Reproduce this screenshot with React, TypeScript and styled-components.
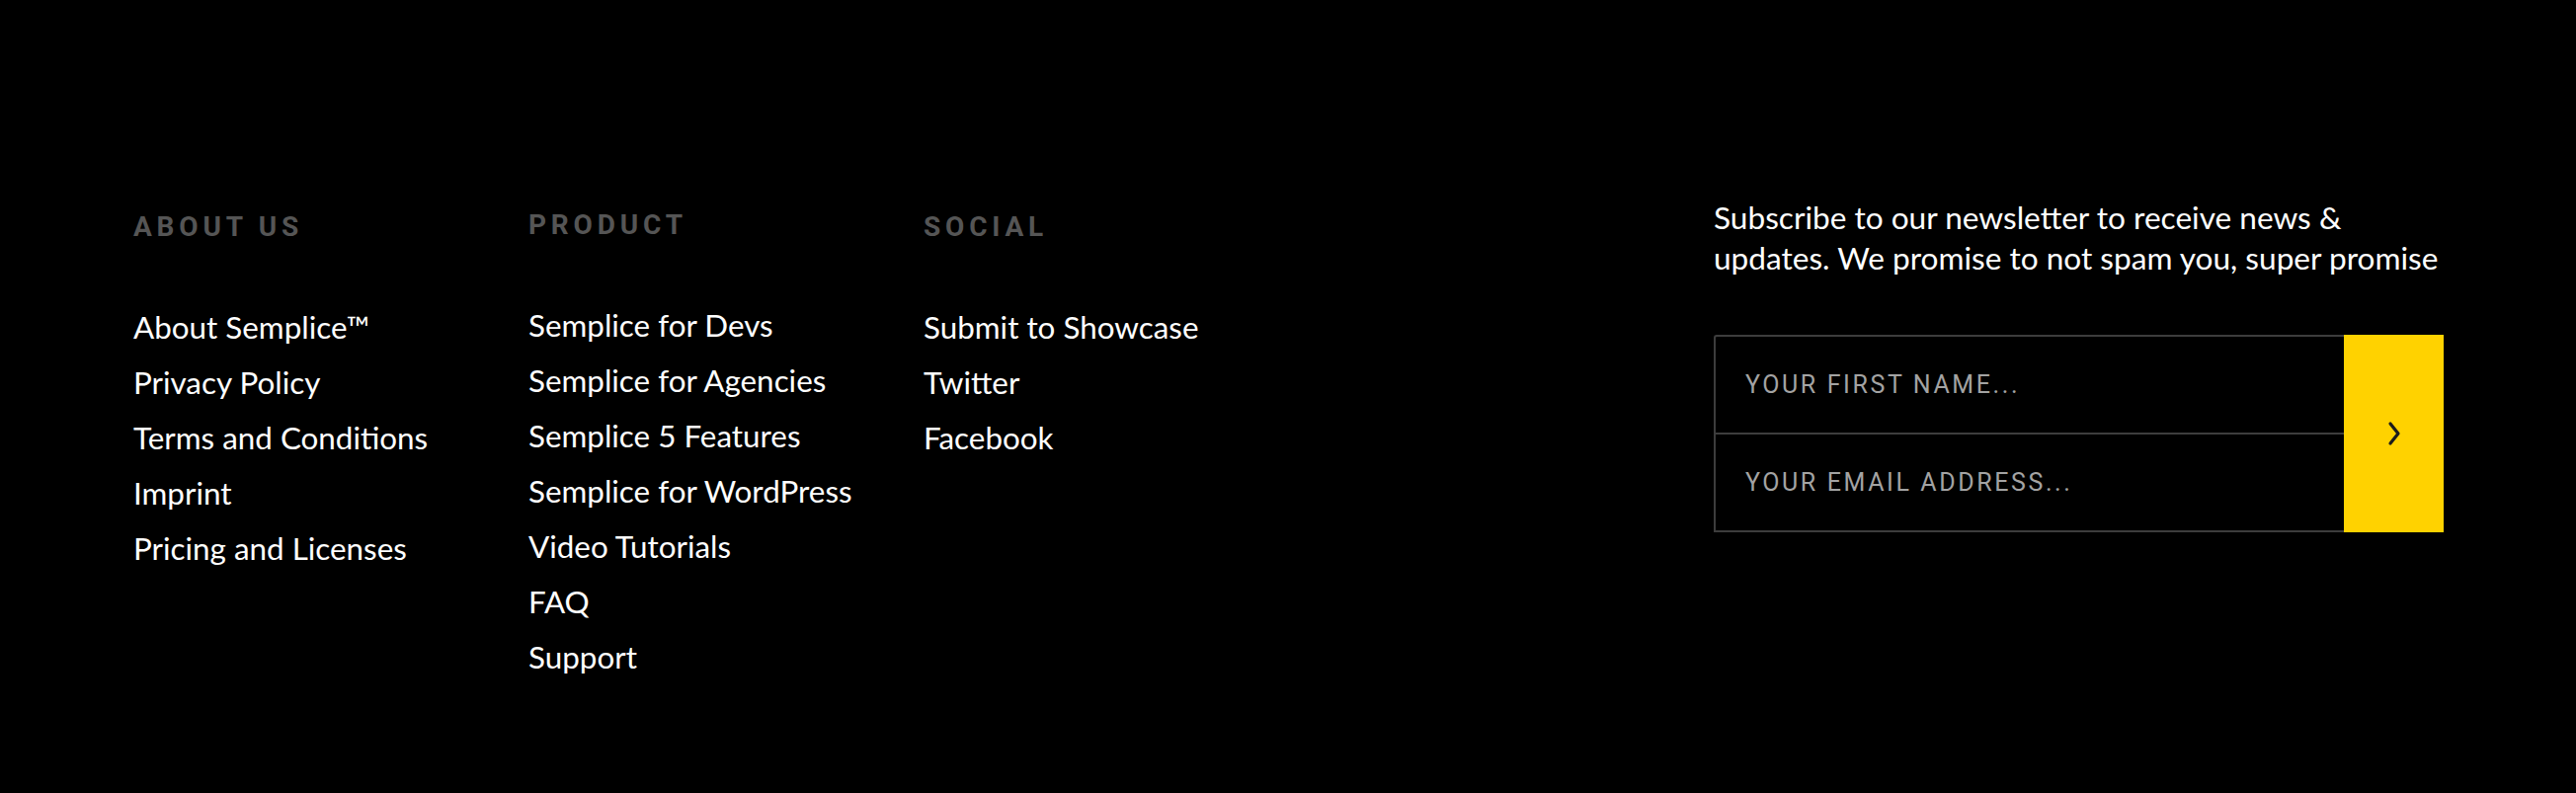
import React from "react";
import styled, { createGlobalStyle } from "styled-components";

const GlobalStyle = createGlobalStyle`
  html, body {
    margin: 0;
    padding: 0;
    background: #000;
  }
  body {
    font-family: "Lato", "Liberation Sans", sans-serif;
    -webkit-font-smoothing: antialiased;
  }
  * { box-sizing: border-box; }
`;

const Footer = styled.footer`
  display: flex;
  align-items: flex-start;
  justify-content: space-between;
  min-height: 803px;
  padding: 200px 134px 0 135px;
  background: #000;
`;

const Columns = styled.div`
  display: flex;
  padding-top: 13px;
`;

const Column = styled.div<{ $raise?: number }>`
  display: flex;
  flex-direction: column;
  width: 400px;
  margin-top: ${(p) => -(p.$raise ?? 0)}px;
`;

const Heading = styled.h3`
  margin: 0;
  font-family: "Roboto", "Liberation Sans", sans-serif;
  font-weight: 700;
  font-size: 28px;
  line-height: 34px;
  letter-spacing: 4.8px;
  color: #555;
  text-transform: uppercase;
`;

const LinkList = styled.ul`
  list-style: none;
  margin: 56px 0 0;
  padding: 0;
  display: flex;
  flex-direction: column;
`;

const LinkItem = styled.li`
  font-size: 31.4px;
  font-weight: 400;
  line-height: 56px;
  color: #fff;
  white-space: nowrap;
`;

const Link = styled.a`
  color: inherit;
  text-decoration: none;
`;

const Newsletter = styled.div`
  display: flex;
  flex-direction: column;
  width: 739px;
`;

const Intro = styled.p`
  margin: 0;
  font-size: 31.6px;
  font-weight: 400;
  line-height: 41px;
  color: #fff;
  white-space: nowrap;
`;

const Form = styled.form`
  display: flex;
  margin-top: 57px;
  height: 200px;
`;

const Fields = styled.div`
  flex: 1;
  display: flex;
  flex-direction: column;
  border: 2px solid #3d3d3d;
  border-right: none;
  border-radius: 3px 0 0 0;
`;

const Field = styled.input<{ $last?: boolean }>`
  flex: 1;
  width: 100%;
  min-width: 0;
  background: transparent;
  border: none;
  border-bottom: ${(p) => (p.$last ? "none" : "2px solid #3d3d3d")};
  outline: none;
  padding: 0 0 0 30px;
  font-family: "Roboto", "Liberation Sans", sans-serif;
  font-size: 25px;
  letter-spacing: 2.6px;
  color: #fff;
  &::placeholder {
    color: #a3a3a3;
    opacity: 1;
  }
`;

const Submit = styled.button`
  width: 101px;
  flex: none;
  border: none;
  padding: 0;
  background: #ffd200;
  display: flex;
  align-items: center;
  justify-content: center;
  cursor: pointer;
`;

const columns = [
  {
    title: "About Us",
    raise: 0,
    links: [
      "About Semplice™",
      "Privacy Policy",
      "Terms and Conditions",
      "Imprint",
      "Pricing and Licenses",
    ],
  },
  {
    title: "Product",
    raise: 2,
    links: [
      "Semplice for Devs",
      "Semplice for Agencies",
      "Semplice 5 Features",
      "Semplice for WordPress",
      "Video Tutorials",
      "FAQ",
      "Support",
    ],
  },
  {
    title: "Social",
    raise: 0,
    links: ["Submit to Showcase", "Twitter", "Facebook"],
  },
];

export default function App() {
  return (
    <>
      <GlobalStyle />
      <Footer>
        <Columns>
          {columns.map((col) => (
            <Column key={col.title} $raise={col.raise}>
              <Heading>{col.title}</Heading>
              <LinkList>
                {col.links.map((l) => (
                  <LinkItem key={l}>
                    <Link href="#">{l}</Link>
                  </LinkItem>
                ))}
              </LinkList>
            </Column>
          ))}
        </Columns>
        <Newsletter>
          <Intro>
            Subscribe to our newsletter to receive news &amp;
            <br />
            updates. We promise to not spam you, super promise
          </Intro>
          <Form onSubmit={(e) => e.preventDefault()}>
            <Fields>
              <Field type="text" placeholder="YOUR FIRST NAME..." />
              <Field type="email" placeholder="YOUR EMAIL ADDRESS..." $last />
            </Fields>
            <Submit type="submit" aria-label="Subscribe">
              <svg width="16" height="28" viewBox="0 0 16 28" fill="none">
                <path
                  d="M4 4 L12 14 L4 24"
                  stroke="#1c1c1c"
                  strokeWidth="3.2"
                  strokeLinecap="round"
                  strokeLinejoin="round"
                />
              </svg>
            </Submit>
          </Form>
        </Newsletter>
      </Footer>
    </>
  );
}
